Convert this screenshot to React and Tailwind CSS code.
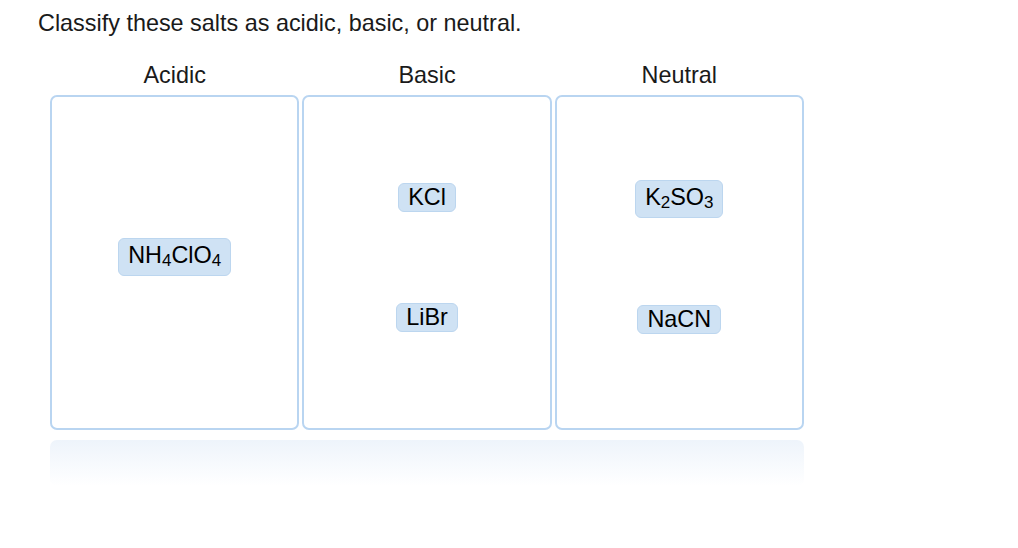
import React from 'react';

const columns = [
  { label: 'Acidic', pad: 'pt-[141px]', gap: 'gap-0', items: [['NH', '4', 'ClO', '4']] },
  { label: 'Basic', pad: 'pt-[86px]', gap: 'gap-[91px]', items: [['KCl'], ['LiBr']] },
  { label: 'Neutral', pad: 'pt-[83px]', gap: 'gap-[87px]', items: [['K', '2', 'SO', '3'], ['NaCN']] },
];

function Chip({ parts }) {
  const hasSub = parts.length > 1;
  return (
    <div
      className={
        'flex items-center rounded-[6px] border border-[#bcd6ef] bg-[#cfe2f4] px-[9px] text-[23.4px] text-black ' +
        (hasSub ? 'h-[38px] pb-[3px]' : 'h-[29px]')
      }
    >
      {parts.map((p, i) =>
        i % 2 === 1 ? (
          <span key={i} className="relative top-[5px] text-[17px]">
            {p}
          </span>
        ) : (
          <span key={i}>{p}</span>
        )
      )}
    </div>
  );
}

export default function App() {
  return (
    <div
      className="h-[548px] w-[1018px] bg-white text-[#1a1a1a]"
      style={{ fontFamily: '"Liberation Sans", Arial, sans-serif' }}
    >
      <div className="pl-[38px] pt-[10px] text-[23.4px] leading-[26px]">
        Classify these salts as acidic, basic, or neutral.
      </div>

      <div className="ml-[50px] mt-[26px] w-[754px]">
        <div className="grid grid-cols-3 gap-[3px]">
          {columns.map((c) => (
            <div key={c.label} className="flex flex-col">
              <div className="text-center text-[23.4px] leading-[26px]">{c.label}</div>
              <div
                className={
                  'mt-[7px] flex h-[335px] flex-col items-center rounded-[7px] border-2 border-[#b9d5f1] ' +
                  c.pad +
                  ' ' +
                  c.gap
                }
              >
                {c.items.map((parts, i) => (
                  <Chip key={i} parts={parts} />
                ))}
              </div>
            </div>
          ))}
        </div>
        <div className="mt-[10px] h-[46px] rounded-[7px] bg-gradient-to-b from-[#eef4fb] to-white" />
      </div>
    </div>
  );
}
